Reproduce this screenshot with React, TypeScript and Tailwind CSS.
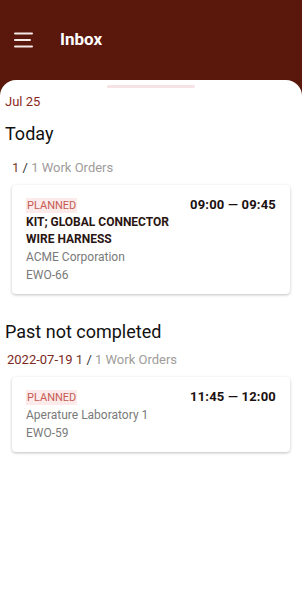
import React from "react";

interface WorkOrder {
	id: string;
	status: string;
	title?: string[];
	customer: string;
	from: string;
	to: string;
}

const todayOrders: WorkOrder[] = [
	{
		id: "EWO-66",
		status: "PLANNED",
		title: ["KIT; GLOBAL CONNECTOR", "WIRE HARNESS"],
		customer: "ACME Corporation",
		from: "09:00",
		to: "09:45",
	},
];

const pastOrders: WorkOrder[] = [
	{
		id: "EWO-59",
		status: "PLANNED",
		customer: "Aperature Laboratory 1",
		from: "11:45",
		to: "12:00",
	},
];

const Hamburger = () => (
	<svg width="22" height="18" viewBox="0 0 22 18" className="block">
		<rect x="1" y="1.5" width="19" height="2" rx="1" fill="#f3e9e6" />
		<rect x="1" y="8" width="17" height="2" rx="1" fill="#f3e9e6" />
		<rect x="1" y="14.5" width="19" height="2" rx="1" fill="#f3e9e6" />
	</svg>
);

const OrderCard: React.FC<{ order: WorkOrder }> = ({ order }) => (
	<div className="mx-[12px] rounded-[4px] bg-white shadow-[0_1px_3px_rgba(0,0,0,0.25)] px-[14px] pt-[11px] pb-[10px]">
		<div className="flex justify-between items-center h-[18px]">
			<span className="bg-[#fcebea] text-[#c65b52] text-[11px] leading-[15px] px-[1px]">
				{order.status}
			</span>
			<span className="text-[13px] font-bold text-[#1b1010] leading-[18px] tracking-[0.2px]">
				{order.from} — {order.to}
			</span>
		</div>
		{order.title?.map((t) => (
			<div
				key={t}
				className="text-[12px] font-bold text-[#2a1512] leading-[17px]">
				{t}
			</div>
		))}
		<div className="text-[12px] text-[#7a7a7a] leading-[18px]">
			{order.customer}
		</div>
		<div className="text-[12px] text-[#7a7a7a] leading-[18px]">{order.id}</div>
	</div>
);

const Count: React.FC<{ done: number; total: number }> = ({ done, total }) => (
	<>
		<span className="text-[#7c3b2d]">{done}</span>
		<span className="text-[#333]"> / </span>
		<span className="text-[#a09c9a]">{total} Work Orders</span>
	</>
);

export default function App() {
	return (
		<div
			className="w-[302px] h-[592px] bg-[#5a180d] flex flex-col overflow-hidden"
			style={{ fontFamily: "Roboto, 'Noto Sans', sans-serif" }}>
			<header className="h-[80px] shrink-0 flex items-center px-[13px]">
				<Hamburger />
				<span className="ml-[25px] text-white text-[17px] font-bold">Inbox</span>
			</header>
			<main className="flex-1 bg-white rounded-t-[16px] flex flex-col">
				<div className="mx-auto mt-[5px] w-[88px] h-[3px] rounded-full bg-[#f6e3e5]" />
				<div className="px-[5px] mt-[5px] text-[13px] text-[#8a2a1c] leading-[18px]">
					Jul 25
				</div>
				<div className="px-[5px] mt-[11px] text-[18px] text-[#111] leading-[24px]">
					Today
				</div>
				<div className="px-[12px] mt-[13px] text-[13px] leading-[18px]">
					<Count done={1} total={1} />
				</div>
				<div className="mt-[8px] flex flex-col gap-2">
					{todayOrders.map((o) => (
						<OrderCard key={o.id} order={o} />
					))}
				</div>
				<div className="px-[5px] mt-[26px] text-[18px] text-[#111] leading-[24px]">
					Past not completed
				</div>
				<div className="px-[7px] mt-[7px] text-[13px] leading-[18px]">
					<span className="text-[#7c2a1e]">2022-07-19 </span>
					<Count done={1} total={1} />
				</div>
				<div className="mt-[8px] flex flex-col gap-2">
					{pastOrders.map((o) => (
						<OrderCard key={o.id} order={o} />
					))}
				</div>
			</main>
		</div>
	);
}
